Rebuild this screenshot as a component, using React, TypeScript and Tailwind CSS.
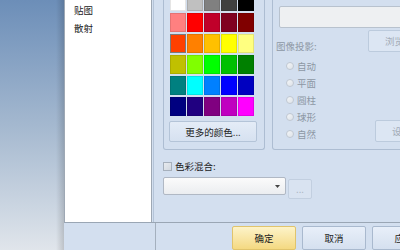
import React from 'react';

const swatches = [
  ['#ffffff', '#c0c0c0', '#808080', '#404040', '#000000'],
  ['#ff8080', '#ff0000', '#c0002a', '#800020', '#800000'],
  ['#ff4000', '#ff8000', '#ffc000', '#ffff00', '#ffff80'],
  ['#c0c000', '#80ff00', '#00ff00', '#00c000', '#008000'],
  ['#008080', '#00ffff', '#0080ff', '#0000ff', '#0000c0'],
  ['#000080', '#200080', '#800080', '#c000c0', '#ff00ff'],
];

const projections = ['自动', '平面', '圆柱', '球形', '自然'];

function Radio({ label }: { label: string }) {
  return (
    <div className="h-[17px] flex items-center gap-[3px] ml-[10px]">
      <span className="w-[8px] h-[8px] rounded-full border border-[#c0c8d2] bg-linear-to-br from-[#f4f6f8] to-[#dde2e8]" />
      <span className="text-[#8d97a4]">{label}</span>
    </div>
  );
}

export default function App() {
  return (
    <div className="w-[400px] h-[250px] overflow-hidden flex font-['Noto_Sans_CJK_SC',sans-serif] text-[9.5px] leading-[12px] text-[#222]">
      {/* desktop behind the dialog */}
      <div className="w-[64px] shrink-0 flex justify-end bg-linear-to-b from-[#6c8eb8] via-[#a4b8cf] to-[#e0e5eb]">
        <div className="w-[8px] bg-linear-to-r from-transparent to-[#000]/15" />
      </div>

      <div className="flex-1 flex flex-col bg-[#d3dfef]">
        <div className="h-[224px] flex border-b border-[#9aa6b4]">
          {/* category list */}
          <div className="w-[88px] shrink-0 bg-white border-x border-[#9ea8b4] pl-[9px] pt-px leading-[18px]">
            <div>贴图</div>
            <div>散射</div>
          </div>
          <div className="w-px ml-px bg-[#b4c4d8]" />

          <div className="ml-[9px] flex flex-col">
            <div className="h-[150px] flex gap-[7px]">
              {/* colour group */}
              <div className="w-[102px] border-x border-b border-[#adbdd2] rounded-b-[3px] px-[6px] flex flex-col">
                <div className="mt-[-8px] grid grid-cols-[repeat(5,16px)] auto-rows-[19px] gap-x-px gap-y-[2px]">
                  {swatches.flatMap((row, r) =>
                    row.map((c, i) => (
                      <div
                        key={r + '-' + i}
                        className={
                          r === 2 && i === 0
                            ? 'border border-[#7a7a7a]'
                            : 'border border-[#000]/10'
                        }
                        style={{ backgroundColor: c }}
                      />
                    ))
                  )}
                </div>
                <div className="mt-[5px] ml-[-1px] w-[88px] h-[21px] flex items-center justify-center rounded-[2px] border border-[#b4c4d8] bg-linear-to-b from-[#e4ecf7] to-[#d6e1f0]">
                  更多的颜色...
                </div>
              </div>

              {/* image group */}
              <div className="w-[200px] border-x border-b border-[#adbdd2] rounded-b-[3px] flex flex-col">
                <div className="mt-[6px] ml-[6px] h-[22px] border border-[#b8c2ce] bg-[#eef0f2] rounded-[2px]" />
                <div className="flex ml-[3px]">
                  <div className="w-[92px] flex flex-col pt-[9px]">
                    <div className="h-[17px] flex items-center text-[#8d97a4]">图像投影:</div>
                    <div className="mt-[3px]">
                      {projections.map((p) => (
                        <Radio key={p} label={p} />
                      ))}
                    </div>
                  </div>
                  <div className="flex flex-col">
                    <div className="mt-[2px] w-[53px] h-[22px] flex items-center justify-center rounded-[2px] border border-[#bccbdd] bg-[#dce6f3] text-[#a2abb7]">
                      浏览
                    </div>
                    <div className="mt-[68px] ml-[7px] w-[53px] h-[22px] flex items-center justify-center rounded-[2px] border border-[#bccbdd] bg-[#dce6f3] text-[#a2abb7]">
                      设置
                    </div>
                  </div>
                </div>
              </div>
            </div>

            <div className="mt-[10px] h-[12px] flex items-center gap-[3px]">
              <span className="w-[9px] h-[9px] border border-[#a6b0bc] bg-linear-to-br from-[#e8ebef] to-[#d2d8df]" />
              <span>色彩混合:</span>
            </div>
            <div className="mt-[5px] flex items-start">
              <div className="w-[123px] h-[18px] flex items-center justify-end pr-[5px] border border-[#b0b8c4] rounded-[2px] bg-linear-to-b from-[#fbfbfb] to-[#ebedf0]">
                <svg width="5" height="3" viewBox="0 0 5 3">
                  <path d="M0 0h5L2.5 3z" fill="#444" />
                </svg>
              </div>
              <div className="ml-[2px] mt-[2px] w-[24px] h-[20px] flex items-center justify-center rounded-[2px] border border-[#c2cfe0] bg-[#d9e3f1] text-[#a8b0bb]">
                ...
              </div>
            </div>
          </div>
        </div>

        {/* button bar */}
        <div className="flex-1 flex">
          <div className="w-[92px] border-r border-[#a4b0be]" />
          <div className="ml-[76px] pt-[3px] flex gap-[6px]">
            <div className="w-[64px] h-[24px] flex items-center justify-center rounded-[2px] border border-[#e0c46c] bg-linear-to-b from-[#fdf3c8] to-[#f4d981]">
              确定
            </div>
            <div className="w-[64px] h-[24px] flex items-center justify-center rounded-[2px] border border-[#a9b9ce] bg-linear-to-b from-[#e8eff9] to-[#d5e0ef]">
              取消
            </div>
            <div className="w-[64px] h-[24px] flex items-center justify-center rounded-[2px] border border-[#a9b9ce] bg-linear-to-b from-[#e8eff9] to-[#d5e0ef]">
              应用
            </div>
          </div>
        </div>
      </div>
    </div>
  );
}
